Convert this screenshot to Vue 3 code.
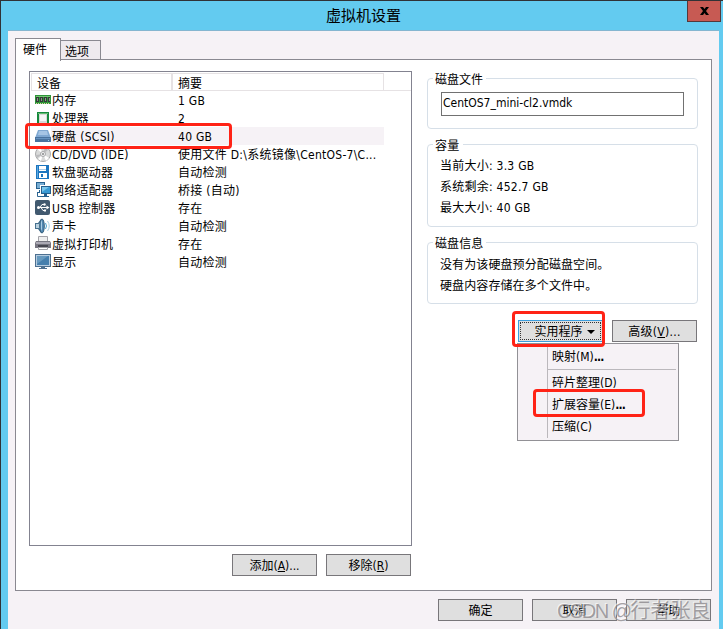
<script setup>
const devices = [
  ['memory', '内存', '1 GB'],
  ['cpu', '处理器', '2'],
  ['disk', '硬盘 (SCSI)', '40 GB'],
  ['cd', 'CD/DVD (IDE)', '使用文件 D:\\系统镜像\\CentOS-7\\C...'],
  ['floppy', '软盘驱动器', '自动检测'],
  ['network', '网络适配器', '桥接 (自动)'],
  ['usb', 'USB 控制器', '存在'],
  ['sound', '声卡', '自动检测'],
  ['printer', '虚拟打印机', '存在'],
  ['display', '显示', '自动检测'],
]
</script>

<template>
  <div class="window">
    <header class="titlebar">
      <h1>虚拟机设置</h1>
      <button class="close" aria-label="关闭">
        <svg width="9" height="8" viewBox="0 0 9 8"><path d="M0 0h3l1.5 2L6 0h3L6 4l3 4H6L4.500 6 3 8H0l3-4z" /></svg>
      </button>
    </header>
    <main class="client">
      <nav class="tabs"><div class="tab active">硬件</div><div class="tab">选项</div></nav>
      <section class="panel">
        <div class="left">
          <div class="list">
            <div class="row head"><span>设备</span><span>摘要</span></div>
            <div v-for="d in devices" :key="d[0]" class="row" :class="{ selected: d[0] === 'disk' }">
              <span class="device">
                <svg class="icon" width="16" height="16" viewBox="0 0 16 16">
                  <g v-if="d[0] === 'memory'">
                    <path fill="#2d9438" d="M0 3h16v9H0z" /><path fill="#75c574" d="M1 4h14v1H1z" />
                    <path fill="#343a36" d="M1 5h3v5H1zM5 5h3v5H5zM9 5h3v5H9zM13 5h2v5h-2z" />
                    <path stroke="#8b948a" d="M2.500 6v3M6.500 6v3M10.500 6v3M14.500 6v3" />
                    <path stroke="#d6d69d" stroke-dasharray="1 1" d="M1 11.500h14" />
                  </g>
                  <g v-else-if="d[0] === 'cpu'">
                    <path fill="#16893c" d="M2 2h12v13H2z" /><path fill="#63bb70" d="M3 3h10v1H3z" />
                    <path fill="#d7d9d7" d="M4 4h8v9H4z" /><path fill="#f5f5f4" d="M5 5h6v6H5z" />
                  </g>
                  <g v-else-if="d[0] === 'disk'">
                    <path fill="#7fa8d2" d="M3 2h10l3 8H0z" /><path fill="#a6c5e5" d="M4 3h8l1 4H3z" />
                    <path fill="#49739f" d="M0 9h16v5H0z" /><path fill="#6693c0" d="M1 10h14v1H1z" />
                    <path fill="#9bd7ed" d="M13 12h1v1h-1z" />
                  </g>
                  <g v-else-if="d[0] === 'cd'">
                    <circle cx="8" cy="8" r="7.500" fill="#d9dada" stroke="#a8a9ab" />
                    <path fill="#fff" d="M8 8L2 3l3-2zM8 8l6 4-3 3zM8 8L6 15l-3-2z" />
                    <path fill="#bbbcbe" d="M8 8l2-7 3 3zM8 8l-7 1 1 3z" />
                    <circle cx="8" cy="8" r="2.500" fill="#f3f3f3" stroke="#a7a8aa" /><circle cx="8" cy="8" r="1" fill="#858789" />
                  </g>
                  <g v-else-if="d[0] === 'floppy'">
                    <path fill="#1c75bf" d="M1 1h13v14H1z" /><path fill="#5da9e0" d="M2 2h1v12H2z" />
                    <path fill="#fff" d="M4 2h7v5H4zM4 9h8v5H4z" /><path fill="#abcde9" d="M4 5h7v1H4z" />
                    <path fill="#1c75bf" d="M6 10h2v3H6z" />
                  </g>
                  <g v-else-if="d[0] === 'network'">
                    <path fill="#24608f" d="M1 0h9v7H1zM4 8h2v2H4zM2 10h5v1H2z" /><path fill="#77acd2" d="M2 1h7v5H2z" />
                    <path fill="#fff" d="M5 3h11v10H5z" /><path fill="#24608f" d="M6 4h10v8H6zM9 12h3v2H9zM7 14h7v1H7z" />
                    <path fill="#3a9bd5" d="M7 5h8v6H7z" /><path fill="#7bc6eb" d="M7 5h7L7 10z" />
                    <path stroke="#2c6591" fill="none" d="M2.500 11v3.500H7" />
                  </g>
                  <g v-else-if="d[0] === 'usb'">
                    <rect x="0" y="0" width="15" height="15" rx="2" fill="#41596f" />
                    <path fill="none" stroke="#fff" d="M3 7.500h10M5 7.500l2-3h2M6 7.500l2 3h2" />
                    <circle cx="3.500" cy="7.500" r="1.500" fill="#fff" /><circle cx="9.500" cy="4.500" r="1.200" fill="#fff" />
                    <path fill="#fff" d="M11.500 5.500l3 2-3 2zM9 9.500h2v2H9z" />
                  </g>
                  <g v-else-if="d[0] === 'sound'">
                    <path fill="#47718f" d="M0 5h3l3-4h1v14H6l-3-4H0z" /><path fill="#b9d1df" d="M1 6h3l2-3v9l-2-2H1z" />
                    <ellipse cx="7" cy="8" rx="2.300" ry="7" fill="#5288b2" stroke="#345e7c" />
                    <path fill="#a9cce2" d="M6 4l1-2v11l-1-2z" />
                    <path fill="none" stroke="#49a1cd" d="M10.500 5q2 3 0 6" /><path fill="none" stroke="#a8cfe3" d="M12.500 3q3.500 5 0 10" />
                  </g>
                  <g v-else-if="d[0] === 'printer'">
                    <path fill="#eee" stroke="#a2a2a8" d="M3.500.5h9v6h-9z" /><path fill="#777681" d="M1 5h14l1 2v5H0V7z" />
                    <path fill="#aba9b4" d="M1 6h14v2H1z" /><path fill="#464650" d="M3 9h10v2H3z" />
                    <path fill="#fff" stroke="#a2a2a8" d="M3.500 11.500h9v2h-9z" />
                  </g>
                  <g v-else>
                    <path fill="#4d7090" d="M0 0h16v13H0zM6 13h4v1H6zM4 14h8v1H4z" />
                    <path fill="#b5cce0" d="M1 1h14v11H1z" /><path fill="#457fad" d="M2 2h12v9H2z" /><path fill="#6799be" d="M2 2h11L2 10z" />
                  </g>
                </svg><b>{{ d[1] }}</b>
              </span>
              <span class="summary">{{ d[2] }}</span>
            </div>
          </div>
          <div class="actions">
            <button class="btn">添加(<u>A</u>)...</button><button class="btn">移除(<u>R</u>)</button>
          </div>
        </div>
        <div class="right">
          <div class="group file"><h2>磁盘文件</h2><div class="field">CentOS7_mini-cl2.vmdk</div></div>
          <div class="group capacity"><h2>容量</h2><p>当前大小: 3.3 GB</p><p>系统剩余: 452.7 GB</p><p>最大大小: 40 GB</p></div>
          <div class="group info"><h2>磁盘信息</h2><p>没有为该硬盘预分配磁盘空间。</p><p>硬盘内容存储在多个文件中。</p></div>
          <div class="actions tools">
            <div class="dropdown">
              <button class="btn focused">实用程序<svg width="8" height="4" viewBox="0 0 8 4"><path d="M0 0h8L4 4z" /></svg></button>
              <div class="menu">
                <div class="item first">映射(M)<strong>...</strong></div>
                <div class="item">碎片整理(D)</div>
                <div class="item">扩展容量(E)<strong>...</strong></div>
                <div class="item">压缩(C)</div>
              </div>
            </div>
            <button class="btn advanced">高级(<u>V</u>)...</button>
          </div>
        </div>
      </section>
      <footer class="actions footer"><button class="btn">确定</button><button class="btn">取消</button><button class="btn">帮助</button></footer>
    </main>
    <div class="mark mark-disk"></div>
    <div class="mark mark-tools"></div>
    <div class="mark mark-expand"></div>
    <div class="watermark"><span>CSDN @</span>行者张良</div>
  </div>
</template>

<style>
body { margin: 0; overflow: hidden; }
</style>

<style scoped>
* { box-sizing: border-box; }
.window {
  position: relative; width: 723px; height: 629px; overflow: hidden; padding: 0 4px 0 7px;
  border: solid #303236; border-width: 1px 0 0 1px; background: #63cbf0; color: #000;
  font: 12px/18px "DejaVu Sans Condensed", "Noto Sans CJK SC", sans-serif; white-space: nowrap;
}
h1, h2, p { margin: 0; font-weight: normal; }
.titlebar { height: 29px; display: flex; justify-content: center; position: relative; }
h1 { font-size: 15px; line-height: 30px; }
.close {
  position: absolute; right: -2px; top: 0; width: 34px; height: 21px; padding: 0 0 1px; display: grid; place-items: center;
  background: #c75a53; border: 1px solid #55383a; border-top: 0;
}
.client { height: 599px; background: #f6f2f6; border-top: 1px solid #85b6d0; padding: 7px 7px 0; }
.tabs { display: flex; align-items: flex-end; height: 22px; position: relative; z-index: 1; }
.tab { width: 40px; height: 20px; border: 1px solid #8a8991; border-left: 0; padding: 2px 0 0 4px; background: #eeeaee; }
.tab.active { width: 46px; height: 23px; margin-bottom: -1px; border-left: 1px solid #8a8991; border-bottom: 0; padding: 2px 0 0 7px; background: #fff; }
.panel { width: 697px; height: 532px; margin-top: -1px; border: 1px solid #8a8991; background: #fff; display: flex; padding: 11px 13px 0; gap: 15px; }
.left { width: 383px; }
.list { height: 475px; border: 1px solid #838390; padding: 1px 1px 0; }
.row { width: 353px; height: 18px; display: grid; grid-template-columns: 142px 1fr; letter-spacing: 0.27px; }
.head { height: 18px; border: 1px solid #e6e2e4; line-height: 20px; position: relative; letter-spacing: 0; }
.head::after { content: ""; position: absolute; left: 352px; top: 16px; width: 27px; height: 1px; background: #e6e2e4; }
.head span { padding-left: 5px; height: 16px; }
.head span + span { margin-left: -3px; border-left: 2px solid #e6e2e4; }
.device { display: flex; align-items: center; padding-left: 4px; }
.icon { flex: none; }
.device b { flex: 1; font-weight: normal; padding-left: 1px; }
.device b, .summary { height: 18px; line-height: 20px; }
.summary { padding-left: 5px; }
.selected b, .selected .summary { background: #f6f2f6; }
.actions { display: flex; justify-content: flex-end; gap: 9px; }
.left .actions { margin-top: 8px; padding-right: 1px; }
.btn {
  width: 85px; height: 22px; border: 1px solid #78767a; padding: 2px 0 0; background: #dfdfdf; color: #000; font: inherit;
  display: flex; align-items: center; justify-content: center;
}
.btn u { text-underline-offset: 1px; }
.advanced { letter-spacing: 0.3px; }
.right { width: 271px; padding-top: 7px; }
.group { border: 1px solid #d6dfe8; border-radius: 4px; padding-left: 12px; margin-bottom: 15px; }
.group h2 { width: max-content; height: 18px; font: inherit; line-height: 20px; background: #fff; margin: -9px 0 0 -7px; padding: 0 3px 0 2px; }
.file { height: 51px; }
.capacity { height: 83px; letter-spacing: 0.25px; }
.info { height: 62px; margin-bottom: 16px; letter-spacing: 0.1px; }
.group p { line-height: 21px; position: relative; top: 2px; }
.info p { top: 3px; }
.field { width: 243px; height: 24px; margin: 4px 0 0 1px; border: 1px solid #717171; padding-left: 1px; line-height: 20px; }
.tools { padding-right: 1px; }
.dropdown { position: relative; }
.focused { outline: 1px dotted #333; outline-offset: -3px; border-color: #3b9ddd; gap: 4px; padding-left: 8px; }
.menu {
  position: absolute; left: -1px; top: 23px; width: 162px; height: 98px; border: 1px solid #929196; background: #f6f2f6; padding-top: 2px;
}
.menu::before { content: ""; position: absolute; left: 29px; top: 1px; bottom: 2px; width: 1px; background: #bbb8bc; }
.item { height: 22px; line-height: 22px; padding-left: 34px; }
.item strong { letter-spacing: -0.8px; }
.item.first { height: 24px; margin: 0 2px 2px 30px; padding-left: 4px; border-bottom: 1px solid #bbb8bc; }
.footer { margin-top: 8px; padding-right: 1px; }
.mark { position: absolute; border: 3px solid #ff2316; border-radius: 4px; }
.mark-disk { left: 24px; top: 122px; width: 207px; height: 26px; }
.mark-tools { left: 511px; top: 310px; width: 93px; height: 36px; }
.mark-expand { left: 532px; top: 388px; width: 112px; height: 28px; }
.watermark {
  position: absolute; left: 556px; top: 595px; font: 20px/30px "Liberation Sans", "Noto Sans CJK SC", sans-serif;
  color: rgba(135, 132, 136, 0.75); text-shadow: -1px -1px 0 rgba(255, 255, 255, 0.6);
}
.watermark span { letter-spacing: -1.5px; }
</style>
